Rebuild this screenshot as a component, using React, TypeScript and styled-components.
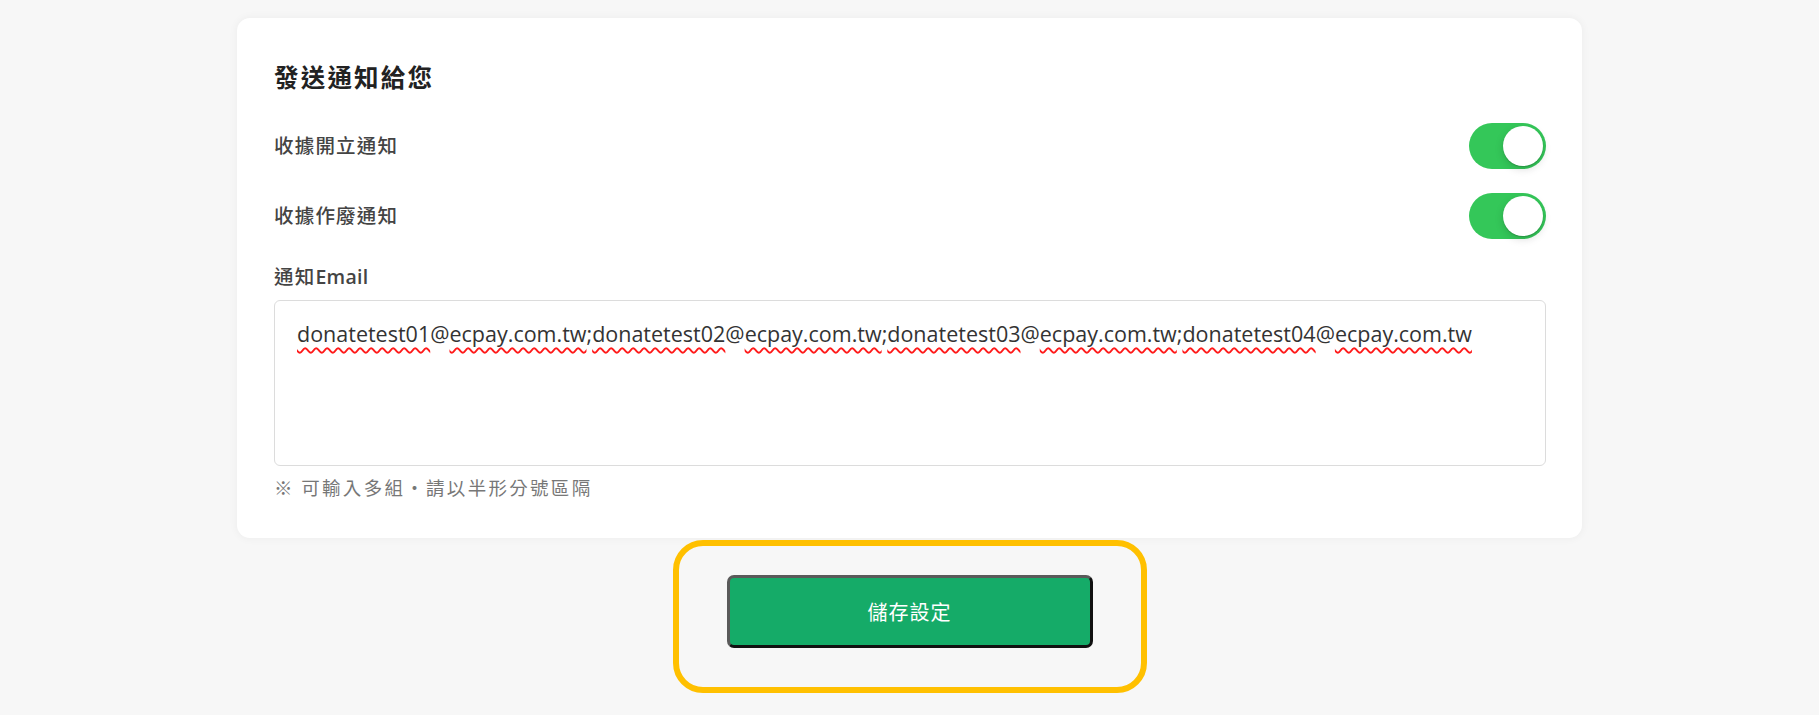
import React, { useState } from 'react';
import styled, { createGlobalStyle } from 'styled-components';

const GlobalStyle = createGlobalStyle`
  html, body {
    margin: 0;
    padding: 0;
    background: #f7f7f7;
    font-family: "Open Sans", "Noto Sans CJK TC", sans-serif;
  }
`;

const Page = styled.main`
  min-height: 715px;
  padding-top: 18px;
  box-sizing: border-box;
  display: flex;
  flex-direction: column;
  align-items: center;
`;

const Card = styled.section`
  width: 1345px;
  box-sizing: border-box;
  background: #fff;
  border-radius: 13px;
  box-shadow: 0 0 10px rgba(0, 0, 0, 0.05);
  padding: 42px 36px 38px 37px;
  display: flex;
  flex-direction: column;
`;

const Title = styled.h2`
  margin: 0 0 29px;
  font-family: "Noto Sans CJK TC", sans-serif;
  font-size: 24.5px;
  line-height: 34px;
  font-weight: 700;
  letter-spacing: 2.2px;
  color: #222;
`;

const Row = styled.div`
  display: flex;
  align-items: center;
  justify-content: space-between;
  height: 46px;
  margin-bottom: 24px;

  &:last-of-type {
    margin-bottom: 26px;
  }
`;

const Label = styled.label`
  font-family: "Open Sans", "Noto Sans CJK TC", sans-serif;
  font-size: 19.5px;
  line-height: 28px;
  font-weight: 500;
  letter-spacing: 1.2px;
  color: #444;
`;

const Latin = styled.span`
  font-weight: 600;
  letter-spacing: 0.3px;
`;

const Switch = styled.button<{ $on: boolean }>`
  position: relative;
  width: 77px;
  height: 46px;
  padding: 0;
  border: none;
  border-radius: 23px;
  background: ${p => (p.$on ? '#34c759' : '#d9d9d9')};
  cursor: pointer;
  flex-shrink: 0;
`;

const Knob = styled.span<{ $on: boolean }>`
  position: absolute;
  top: 3px;
  left: ${p => (p.$on ? '34px' : '3px')};
  width: 40px;
  height: 40px;
  border-radius: 50%;
  background: #fff;
  box-shadow: 0 3px 8px rgba(0, 0, 0, 0.15), 0 1px 1px rgba(0, 0, 0, 0.16);
`;

const EmailLabel = styled(Label)`
  margin-bottom: 9px;
`;

const EmailBox = styled.div`
  height: 166px;
  box-sizing: border-box;
  border: 1px solid #dcdcdc;
  border-radius: 6px;
  padding: 17px 22px;
  font-family: "Open Sans", sans-serif;
  font-size: 21.5px;
  line-height: 32px;
  color: #333;
  outline: none;
  word-break: break-all;
`;

const Misspelled = styled.span`
  text-decoration: underline wavy #ff1a1a;
  text-decoration-thickness: 1.5px;
  text-underline-offset: 5px;
  text-decoration-skip-ink: none;
`;

const Hint = styled.p`
  margin: 8px 0 0;
  font-family: "Noto Sans CJK TC", sans-serif;
  font-size: 18.5px;
  line-height: 26px;
  letter-spacing: 2.3px;
  color: #777;
`;

const Highlight = styled.div`
  margin-top: 2px;
  width: 474px;
  height: 153px;
  box-sizing: border-box;
  border: 6px solid #ffc000;
  border-radius: 30px;
  padding: 29px 48px 0;
`;

const SaveButton = styled.button`
  width: 100%;
  height: 73px;
  box-sizing: border-box;
  border: 3px solid;
  border-color: #5a5a5a #111 #111 #5a5a5a;
  border-radius: 7px;
  background: #15ab68;
  color: #fff;
  font-family: "Noto Sans CJK TC", sans-serif;
  font-size: 20px;
  letter-spacing: 1px;
  cursor: pointer;
`;

const emails = ['donatetest01', 'donatetest02', 'donatetest03', 'donatetest04'];

const App: React.FC = () => {
  const [issueOn, setIssueOn] = useState(true);
  const [voidOn, setVoidOn] = useState(true);

  return (
    <>
      <GlobalStyle />
      <Page lang="zh-Hant-TW">
        <Card>
          <Title>發送通知給您</Title>
          <Row>
            <Label>收據開立通知</Label>
            <Switch $on={issueOn} onClick={() => setIssueOn(!issueOn)} aria-label="收據開立通知">
              <Knob $on={issueOn} />
            </Switch>
          </Row>
          <Row>
            <Label>收據作廢通知</Label>
            <Switch $on={voidOn} onClick={() => setVoidOn(!voidOn)} aria-label="收據作廢通知">
              <Knob $on={voidOn} />
            </Switch>
          </Row>
          <EmailLabel>
            通知<Latin>Email</Latin>
          </EmailLabel>
          <EmailBox role="textbox" contentEditable suppressContentEditableWarning>
            {emails.map((name, i) => (
              <React.Fragment key={name}>
                <Misspelled>{name}</Misspelled>@<Misspelled>ecpay.com.tw</Misspelled>
                {i < emails.length - 1 ? ';' : ''}
              </React.Fragment>
            ))}
          </EmailBox>
          <Hint>※ 可輸入多組・請以半形分號區隔</Hint>
        </Card>
        <Highlight>
          <SaveButton>儲存設定</SaveButton>
        </Highlight>
      </Page>
    </>
  );
};

export default App;
